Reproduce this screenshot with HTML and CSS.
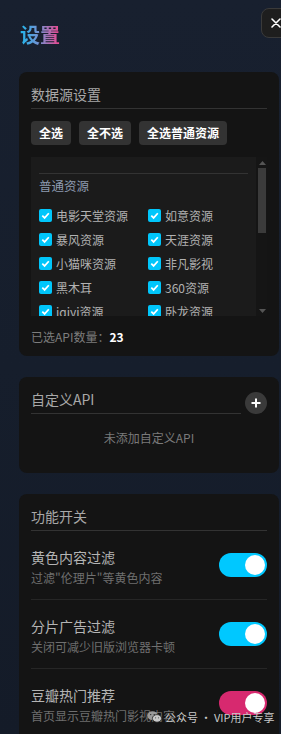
FILE: index.html
```html
<!DOCTYPE html>
<html lang="zh-CN">
<head>
<meta charset="utf-8">
<title>设置</title>
<link rel="stylesheet" href="styles.css">
</head>
<body>
<div class="panel">
  <header class="header">
    <h1 class="title">设置</h1>
  </header>
  <button class="close" aria-label="关闭">
    <svg width="10" height="10" viewBox="0 0 10 10"><path d="M1 1L9 9M9 1L1 9" stroke="#fff" stroke-width="1.6" stroke-linecap="round"/></svg>
  </button>

  <section class="card">
    <h2 class="card-title">数据源设置</h2>
    <div class="btns">
      <button class="btn">全选</button>
      <button class="btn">全不选</button>
      <button class="btn">全选普通资源</button>
    </div>
    <div class="scrollbox">
      <div class="scroll-content">
        <div class="group">
          <div class="group-title">普通资源</div>
          <div class="items">
            <label class="item"><span class="cb"><svg width="9" height="9" viewBox="0 0 9 9"><path d="M1.3 4.6L3.6 6.9L7.8 2.2" fill="none" stroke="#fff" stroke-width="1.7"/></svg></span>电影天堂资源</label>
            <label class="item"><span class="cb"><svg width="9" height="9" viewBox="0 0 9 9"><path d="M1.3 4.6L3.6 6.9L7.8 2.2" fill="none" stroke="#fff" stroke-width="1.7"/></svg></span>如意资源</label>
            <label class="item"><span class="cb"><svg width="9" height="9" viewBox="0 0 9 9"><path d="M1.3 4.6L3.6 6.9L7.8 2.2" fill="none" stroke="#fff" stroke-width="1.7"/></svg></span>暴风资源</label>
            <label class="item"><span class="cb"><svg width="9" height="9" viewBox="0 0 9 9"><path d="M1.3 4.6L3.6 6.9L7.8 2.2" fill="none" stroke="#fff" stroke-width="1.7"/></svg></span>天涯资源</label>
            <label class="item"><span class="cb"><svg width="9" height="9" viewBox="0 0 9 9"><path d="M1.3 4.6L3.6 6.9L7.8 2.2" fill="none" stroke="#fff" stroke-width="1.7"/></svg></span>小猫咪资源</label>
            <label class="item"><span class="cb"><svg width="9" height="9" viewBox="0 0 9 9"><path d="M1.3 4.6L3.6 6.9L7.8 2.2" fill="none" stroke="#fff" stroke-width="1.7"/></svg></span>非凡影视</label>
            <label class="item"><span class="cb"><svg width="9" height="9" viewBox="0 0 9 9"><path d="M1.3 4.6L3.6 6.9L7.8 2.2" fill="none" stroke="#fff" stroke-width="1.7"/></svg></span>黑木耳</label>
            <label class="item"><span class="cb"><svg width="9" height="9" viewBox="0 0 9 9"><path d="M1.3 4.6L3.6 6.9L7.8 2.2" fill="none" stroke="#fff" stroke-width="1.7"/></svg></span>360资源</label>
            <label class="item"><span class="cb"><svg width="9" height="9" viewBox="0 0 9 9"><path d="M1.3 4.6L3.6 6.9L7.8 2.2" fill="none" stroke="#fff" stroke-width="1.7"/></svg></span>iqiyi资源</label>
            <label class="item"><span class="cb"><svg width="9" height="9" viewBox="0 0 9 9"><path d="M1.3 4.6L3.6 6.9L7.8 2.2" fill="none" stroke="#fff" stroke-width="1.7"/></svg></span>卧龙资源</label>
            <label class="item"><span class="cb"><svg width="9" height="9" viewBox="0 0 9 9"><path d="M1.3 4.6L3.6 6.9L7.8 2.2" fill="none" stroke="#fff" stroke-width="1.7"/></svg></span>华为吧资源</label>
            <label class="item"><span class="cb"><svg width="9" height="9" viewBox="0 0 9 9"><path d="M1.3 4.6L3.6 6.9L7.8 2.2" fill="none" stroke="#fff" stroke-width="1.7"/></svg></span>极速资源</label>
          </div>
        </div>
      </div>
      <div class="vscroll" aria-hidden="true">
        <span class="sb-btn"><svg width="7" height="4" viewBox="0 0 7 4"><path d="M0 4H7L3.5 0Z" fill="#555"/></svg></span>
        <span class="sb-track"><span class="sb-thumb"></span></span>
        <span class="sb-btn"><svg width="7" height="4" viewBox="0 0 7 4"><path d="M0 0H7L3.5 4Z" fill="#555"/></svg></span>
      </div>
    </div>
    <div class="count">已选API数量：<b>23</b></div>
  </section>

  <section class="card">
    <div class="api-head">
      <h2 class="card-title grow">自定义API</h2>
      <button class="plus" aria-label="添加">
        <svg width="10" height="10" viewBox="0 0 10 10"><path d="M5 0.5V9.5M0.5 5H9.5" stroke="#fff" stroke-width="2"/></svg>
      </button>
    </div>
    <div class="empty">未添加自定义API</div>
  </section>

  <section class="card">
    <h2 class="card-title">功能开关</h2>
    <div class="row">
      <div class="row-text">
        <div class="row-title">黄色内容过滤</div>
        <div class="row-sub">过滤"伦理片"等黄色内容</div>
      </div>
      <span class="toggle on"><span class="knob"></span></span>
    </div>
    <div class="row">
      <div class="row-text">
        <div class="row-title">分片广告过滤</div>
        <div class="row-sub">关闭可减少旧版浏览器卡顿</div>
      </div>
      <span class="toggle on"><span class="knob"></span></span>
    </div>
    <div class="row">
      <div class="row-text">
        <div class="row-title">豆瓣热门推荐</div>
        <div class="row-sub">首页显示豆瓣热门影视内容</div>
      </div>
      <span class="toggle pink"><span class="knob"></span></span>
    </div>
  </section>
</div>

<div class="watermark">
  <svg class="wm-icon" width="15" height="12" viewBox="0 0 15 12">
    <ellipse cx="5.5" cy="4.6" rx="5.2" ry="4.3" fill="#9a9a9a"/>
    <ellipse cx="10" cy="7.4" rx="4.6" ry="3.8" fill="#c8c8c8" stroke="#222" stroke-width="0.8"/>
    <circle cx="3.7" cy="3.6" r="0.7" fill="#222"/>
    <circle cx="7.2" cy="3.6" r="0.7" fill="#222"/>
    <circle cx="8.6" cy="6.8" r="0.6" fill="#555"/>
    <circle cx="11.5" cy="6.8" r="0.6" fill="#555"/>
  </svg>
  <span class="wm-text">公众号 · VIP用户专享</span>
</div>
</body>
</html>
```

FILE: styles.css
```css
* {
  box-sizing: border-box;
}

html, body {
  margin: 0;
  height: 734px;
  overflow: hidden;
}

body {
  background: linear-gradient(180deg, #18202f 0%, #161e2c 50%, #141b28 100%);
  font-family: "Noto Sans CJK SC", "Noto Sans", sans-serif;
  color: #b0b0b0;
}

.panel {
  position: relative;
  padding: 0 2px 0 19px;
}

.header {
  padding: 24px 0 0 1px;
  height: 72px;
}

.title {
  margin: 0;
  font-size: 20px;
  line-height: 20px;
  font-weight: 700;
  display: inline-block;
  background: linear-gradient(90deg, #1fb8ee 0%, #7a8ed0 50%, #f0448c 100%);
  -webkit-background-clip: text;
  background-clip: text;
  color: transparent;
}

.close {
  position: absolute;
  left: 261px;
  top: 8px;
  width: 30px;
  height: 30px;
  padding: 0;
  border: 1px solid #3a3a3a;
  border-radius: 8px;
  background: #1e1e1e;
  display: flex;
  align-items: center;
  justify-content: center;
}

.card {
  background: #141414;
  border-radius: 8px;
  padding: 12px 12px 9px;
  margin-bottom: 21px;
}

.card-title {
  margin: 0;
  font-size: 14px;
  line-height: 20px;
  font-weight: 400;
  color: #a8a8a8;
  padding-bottom: 4px;
  border-bottom: 1px solid #333;
}

.btns {
  display: flex;
  gap: 8px;
  margin-top: 12px;
}

.btn {
  height: 24px;
  padding: 0 8px;
  border: 0;
  border-radius: 4px;
  background: #333;
  color: #fff;
  font-family: inherit;
  font-size: 12px;
  font-weight: 700;
  line-height: 24px;
}

.scrollbox {
  margin-top: 12px;
  height: 159px;
  display: flex;
  background: #1b1b1b;
}

.scroll-content {
  flex: 1;
  overflow: hidden;
  padding: 16px 8px 0;
}

.vscroll {
  width: 11px;
  flex: none;
  display: flex;
  flex-direction: column;
  background: #151515;
}

.sb-btn {
  height: 11px;
  display: flex;
  align-items: center;
  justify-content: center;
  padding-left: 1px;
}

.sb-track {
  flex: 1;
  display: flex;
  flex-direction: column;
}

.sb-thumb {
  height: 65px;
  margin: 0 1px 0 2px;
  background: #3b3b3b;
}

.group {
  border-top: 1px solid #333;
}

.group-title {
  font-size: 12.5px;
  line-height: 18px;
  color: #8d9ab0;
  margin: 3px 0 8px;
}

.items {
  display: grid;
  grid-template-columns: 100px 100px;
  column-gap: 9px;
  grid-auto-rows: 24px;
}

.item {
  display: flex;
  align-items: center;
  gap: 4px;
  font-size: 12px;
  color: #b2b2b2;
  white-space: nowrap;
}

.cb {
  width: 13px;
  height: 13px;
  border-radius: 2px;
  background: #00c6fb;
  display: flex;
  align-items: center;
  justify-content: center;
  flex: none;
}

.count {
  margin-top: 11px;
  font-size: 12px;
  line-height: 20px;
  color: #7d7d7d;
}

.count b {
  color: #fff;
  font-weight: 700;
}

.api-head {
  display: flex;
  align-items: center;
  gap: 4px;
}

.grow {
  flex: 1;
}

.plus {
  width: 22px;
  height: 22px;
  padding: 0;
  border: 0;
  border-radius: 50%;
  background: #3a3a3a;
  display: flex;
  align-items: center;
  justify-content: center;
  margin-top: 2px;
}

.empty {
  text-align: center;
  font-size: 12px;
  line-height: 18px;
  color: #7a7a7a;
  padding: 15px 0 17px;
}

.row {
  display: flex;
  align-items: center;
  justify-content: space-between;
  padding: 16px 0 12px;
  border-bottom: 1px solid #262626;
}

.row-title {
  font-size: 14px;
  line-height: 20px;
  color: #b4b4b4;
}

.row-sub {
  margin-top: 2px;
  font-size: 12px;
  line-height: 18px;
  color: #6f6f6f;
}

.toggle {
  width: 48px;
  height: 24px;
  border-radius: 12px;
  display: flex;
  align-items: center;
  justify-content: flex-end;
  padding: 0 2px;
  margin-bottom: 4px;
  flex: none;
}

.toggle.on {
  background: #00c8ff;
}

.toggle.pink {
  background: #d7296f;
}

.knob {
  width: 20px;
  height: 20px;
  border-radius: 50%;
  background: #fff;
}

.watermark {
  position: absolute;
  left: 147px;
  top: 709px;
  display: flex;
  align-items: center;
  gap: 3px;
}

.wm-text {
  font-size: 11px;
  line-height: 16px;
  color: #c9c9c9;
}
```
